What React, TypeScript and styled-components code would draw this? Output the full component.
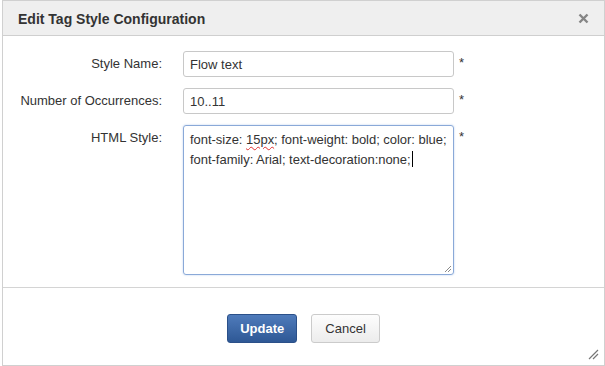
import * as React from 'react';
import styled, { createGlobalStyle } from 'styled-components';

const GlobalStyle = createGlobalStyle`
    html, body {
        margin: 0;
        padding: 0;
        background: #fff;
    }
    body {
        font-family: "Liberation Sans", Arial, sans-serif;
        color: #333;
    }
`;

const Page = styled.div`
    padding-left: 2px;
    width: 603px;
`;

const Dialog = styled.section`
    position: relative;
    width: 601px;
    height: 364px;
    border: 1px solid #d0d0d0;
    display: flex;
    flex-direction: column;
    background: #fff;
`;

const Header = styled.header`
    display: flex;
    align-items: center;
    justify-content: space-between;
    height: 35px;
    padding: 0 14px 0 15px;
    background: #efefef;
    border-bottom: 1px solid #cfcfcf;
    box-sizing: border-box;
`;

const Title = styled.h3`
    margin: 0;
    padding-top: 1px;
    font-size: 14px;
    font-weight: bold;
    color: #333;
`;

const CloseButton = styled.button`
    border: 0;
    background: none;
    padding: 0;
    width: 14px;
    height: 14px;
    display: flex;
    align-items: center;
    justify-content: center;
    cursor: pointer;
`;

const Body = styled.div`
    padding: 15px 0 12px 0;
    border-bottom: 1px solid #d4d4d4;
`;

const Form = styled.div`
    display: grid;
    grid-template-columns: 159px 271px 12px;
    column-gap: 21px;
    row-gap: 11px;
    align-items: start;
`;

const Label = styled.label`
    text-align: right;
    font-size: 13px;
    line-height: 26px;
    color: #333;
`;

const Required = styled.span`
    margin-left: -16px;
    font-size: 13px;
    line-height: 24px;
    color: #333;
`;

const TextInput = styled.input`
    box-sizing: border-box;
    width: 271px;
    height: 26px;
    padding: 0 6px;
    border: 1px solid #c8c8c8;
    border-radius: 3px;
    font-family: "Liberation Sans", Arial, sans-serif;
    font-size: 13px;
    color: #333;
    outline: none;
`;

const TextArea = styled.div`
    position: relative;
    box-sizing: border-box;
    width: 271px;
    height: 150px;
    padding: 4px 6px;
    border: 1px solid #8aa9d8;
    border-radius: 3px;
    box-shadow: 0 0 2px rgba(90, 140, 210, 0.45);
    font-size: 13px;
    line-height: 20px;
    letter-spacing: -0.03px;
    color: #333;
`;

const Line = styled.div`
    white-space: nowrap;
`;

const Misspelt = styled.span`
    text-decoration: underline wavy #e03030;
    text-decoration-thickness: 1px;
    text-underline-offset: 2px;
`;

const Caret = styled.span`
    display: inline-block;
    width: 1px;
    height: 16px;
    margin-left: 1px;
    vertical-align: -3px;
    background: #000;
`;

const Grip = styled.svg`
    position: absolute;
    right: 1px;
    bottom: 1px;
`;

const Footer = styled.footer`
    flex: 1;
    display: flex;
    justify-content: center;
    align-items: flex-start;
    gap: 14px;
    padding-top: 26px;
`;

const Button = styled.button<{ primary?: boolean }>`
    box-sizing: border-box;
    height: 29px;
    padding: 0 ${props => (props.primary ? '12px' : '13px')};
    border-radius: 3px;
    font-family: "Liberation Sans", Arial, sans-serif;
    font-size: 13px;
    font-weight: ${props => (props.primary ? 'bold' : 'normal')};
    color: ${props => (props.primary ? '#fff' : '#333')};
    border: 1px solid ${props => (props.primary ? '#2b5089' : '#cbcbcb')};
    background: ${props =>
        props.primary
            ? 'linear-gradient(#4f7bbb, #2e5895)'
            : 'linear-gradient(#fdfdfd, #ececec)'};
    cursor: pointer;
`;

const DialogGrip = styled.svg`
    position: absolute;
    right: 5px;
    bottom: 5px;
`;

const App: React.FC = () => {
    return (
        <Page>
            <GlobalStyle />
            <Dialog>
                <Header>
                    <Title>Edit Tag Style Configuration</Title>
                    <CloseButton aria-label="close">
                        <svg width="11" height="11" viewBox="0 0 11 11">
                            <path
                                d="M1.5 1.5 L9.5 9.5 M9.5 1.5 L1.5 9.5"
                                stroke="#858585"
                                strokeWidth="2.4"
                            />
                        </svg>
                    </CloseButton>
                </Header>
                <Body>
                    <Form>
                        <Label>Style Name:</Label>
                        <TextInput defaultValue="Flow text" />
                        <Required>*</Required>

                        <Label>Number of Occurrences:</Label>
                        <TextInput defaultValue="10..11" />
                        <Required>*</Required>

                        <Label>HTML Style:</Label>
                        <TextArea role="textbox">
                            <Line>
                                font-size:&nbsp;<Misspelt>15px</Misspelt>; font-weight: bold; color: blue;
                            </Line>
                            <Line>
                                font-family: Arial; text-decoration:none;<Caret />
                            </Line>
                            <Grip width="9" height="9" viewBox="0 0 9 9">
                                <path d="M8 2 L2 8 M8 5 L5 8" stroke="#8a8a8a" strokeWidth="1" />
                            </Grip>
                        </TextArea>
                        <Required>*</Required>
                    </Form>
                </Body>
                <Footer>
                    <Button primary>Update</Button>
                    <Button>Cancel</Button>
                </Footer>
                <DialogGrip width="12" height="12" viewBox="0 0 12 12">
                    <path d="M11 2 L2 11 M11 6 L6 11" stroke="#777" strokeWidth="1.2" />
                </DialogGrip>
            </Dialog>
        </Page>
    );
};

export default App;
